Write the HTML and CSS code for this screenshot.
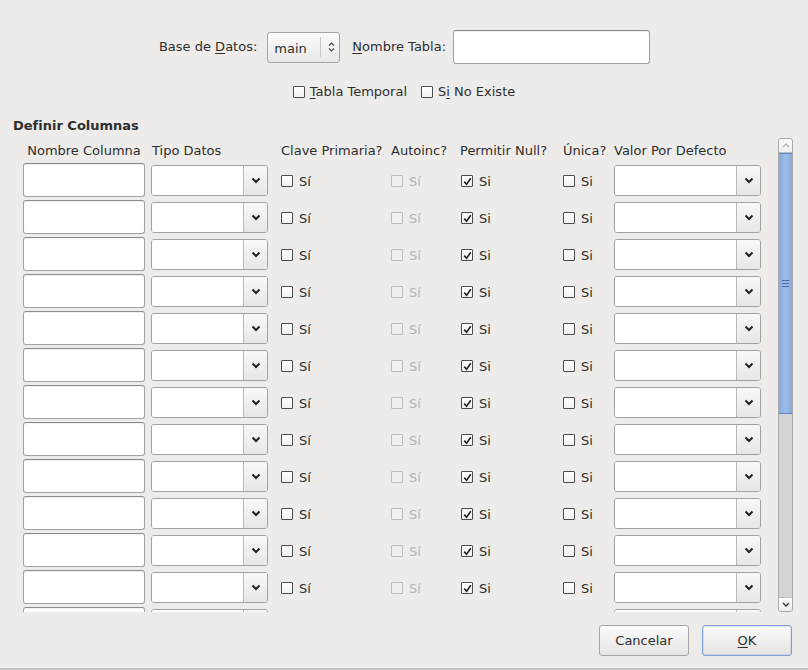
FILE: index.html
```html
<!DOCTYPE html>
<html lang="es">
<head>
<meta charset="utf-8">
<title>Crear Tabla</title>
<link rel="stylesheet" href="styles.css">
</head>
<body>
<div class="top">
  <span class="lbl lbl-base">Base de <u>D</u>atos:</span>
  <div class="dbcombo">
    <span class="dbtext">main</span>
    <span class="dbsep"></span>
    <svg class="updown" width="7" height="10" viewBox="0 0 7 10"><path d="M1 3.5 L3.5 1 L6 3.5 M1 6.5 L3.5 9 L6 6.5" fill="none" stroke="#444" stroke-width="1.1"/></svg>
  </div>
  <span class="lbl lbl-name"><u>N</u>ombre Tabla:</span>
  <div class="entry entry-name"></div>
</div>
<div class="opts">
  <label class="chk"><span class="box"></span><span><u>T</u>abla Temporal</span></label>
  <label class="chk"><span class="box"></span><span>S<u>i</u> No Existe</span></label>
</div>
<div class="title">Definir Columnas</div>
<div class="tablewrap">
  <div class="viewport">
    <div class="grid">
      <div class="hd hd-center">Nombre Columna</div>
      <div class="hd">Tipo Datos</div>
      <div class="hd">Clave Primaria?</div>
      <div class="hd">Autoinc?</div>
      <div class="hd">Permitir Null?</div>
      <div class="hd">Única?</div>
      <div class="hd">Valor Por Defecto</div>

      <div class="entry cell-name"></div><div class="combo c-type"><span class="cfield"></span><span class="carrow"><svg width="10" height="7" viewBox="0 0 10 7"><path d="M1.5 1.5 L5 5 L8.5 1.5" fill="none" stroke="#222" stroke-width="2"/></svg></span></div><label class="chk"><span class="box"></span><span>Sí</span></label><label class="chk dis"><span class="box"></span><span>Sí</span></label><label class="chk"><span class="box on"><svg width="9" height="9" viewBox="0 0 9 9"><path d="M1.2 4.6 L3.6 7.2 L7.8 1.2" fill="none" stroke="#222" stroke-width="1.6"/></svg></span><span>Si</span></label><label class="chk"><span class="box"></span><span>Si</span></label><div class="combo c-def"><span class="cfield"></span><span class="carrow"><svg width="10" height="7" viewBox="0 0 10 7"><path d="M1.5 1.5 L5 5 L8.5 1.5" fill="none" stroke="#222" stroke-width="2"/></svg></span></div>

      <div class="entry cell-name"></div><div class="combo c-type"><span class="cfield"></span><span class="carrow"><svg width="10" height="7" viewBox="0 0 10 7"><path d="M1.5 1.5 L5 5 L8.5 1.5" fill="none" stroke="#222" stroke-width="2"/></svg></span></div><label class="chk"><span class="box"></span><span>Sí</span></label><label class="chk dis"><span class="box"></span><span>Sí</span></label><label class="chk"><span class="box on"><svg width="9" height="9" viewBox="0 0 9 9"><path d="M1.2 4.6 L3.6 7.2 L7.8 1.2" fill="none" stroke="#222" stroke-width="1.6"/></svg></span><span>Si</span></label><label class="chk"><span class="box"></span><span>Si</span></label><div class="combo c-def"><span class="cfield"></span><span class="carrow"><svg width="10" height="7" viewBox="0 0 10 7"><path d="M1.5 1.5 L5 5 L8.5 1.5" fill="none" stroke="#222" stroke-width="2"/></svg></span></div>

      <div class="entry cell-name"></div><div class="combo c-type"><span class="cfield"></span><span class="carrow"><svg width="10" height="7" viewBox="0 0 10 7"><path d="M1.5 1.5 L5 5 L8.5 1.5" fill="none" stroke="#222" stroke-width="2"/></svg></span></div><label class="chk"><span class="box"></span><span>Sí</span></label><label class="chk dis"><span class="box"></span><span>Sí</span></label><label class="chk"><span class="box on"><svg width="9" height="9" viewBox="0 0 9 9"><path d="M1.2 4.6 L3.6 7.2 L7.8 1.2" fill="none" stroke="#222" stroke-width="1.6"/></svg></span><span>Si</span></label><label class="chk"><span class="box"></span><span>Si</span></label><div class="combo c-def"><span class="cfield"></span><span class="carrow"><svg width="10" height="7" viewBox="0 0 10 7"><path d="M1.5 1.5 L5 5 L8.5 1.5" fill="none" stroke="#222" stroke-width="2"/></svg></span></div>

      <div class="entry cell-name"></div><div class="combo c-type"><span class="cfield"></span><span class="carrow"><svg width="10" height="7" viewBox="0 0 10 7"><path d="M1.5 1.5 L5 5 L8.5 1.5" fill="none" stroke="#222" stroke-width="2"/></svg></span></div><label class="chk"><span class="box"></span><span>Sí</span></label><label class="chk dis"><span class="box"></span><span>Sí</span></label><label class="chk"><span class="box on"><svg width="9" height="9" viewBox="0 0 9 9"><path d="M1.2 4.6 L3.6 7.2 L7.8 1.2" fill="none" stroke="#222" stroke-width="1.6"/></svg></span><span>Si</span></label><label class="chk"><span class="box"></span><span>Si</span></label><div class="combo c-def"><span class="cfield"></span><span class="carrow"><svg width="10" height="7" viewBox="0 0 10 7"><path d="M1.5 1.5 L5 5 L8.5 1.5" fill="none" stroke="#222" stroke-width="2"/></svg></span></div>

      <div class="entry cell-name"></div><div class="combo c-type"><span class="cfield"></span><span class="carrow"><svg width="10" height="7" viewBox="0 0 10 7"><path d="M1.5 1.5 L5 5 L8.5 1.5" fill="none" stroke="#222" stroke-width="2"/></svg></span></div><label class="chk"><span class="box"></span><span>Sí</span></label><label class="chk dis"><span class="box"></span><span>Sí</span></label><label class="chk"><span class="box on"><svg width="9" height="9" viewBox="0 0 9 9"><path d="M1.2 4.6 L3.6 7.2 L7.8 1.2" fill="none" stroke="#222" stroke-width="1.6"/></svg></span><span>Si</span></label><label class="chk"><span class="box"></span><span>Si</span></label><div class="combo c-def"><span class="cfield"></span><span class="carrow"><svg width="10" height="7" viewBox="0 0 10 7"><path d="M1.5 1.5 L5 5 L8.5 1.5" fill="none" stroke="#222" stroke-width="2"/></svg></span></div>

      <div class="entry cell-name"></div><div class="combo c-type"><span class="cfield"></span><span class="carrow"><svg width="10" height="7" viewBox="0 0 10 7"><path d="M1.5 1.5 L5 5 L8.5 1.5" fill="none" stroke="#222" stroke-width="2"/></svg></span></div><label class="chk"><span class="box"></span><span>Sí</span></label><label class="chk dis"><span class="box"></span><span>Sí</span></label><label class="chk"><span class="box on"><svg width="9" height="9" viewBox="0 0 9 9"><path d="M1.2 4.6 L3.6 7.2 L7.8 1.2" fill="none" stroke="#222" stroke-width="1.6"/></svg></span><span>Si</span></label><label class="chk"><span class="box"></span><span>Si</span></label><div class="combo c-def"><span class="cfield"></span><span class="carrow"><svg width="10" height="7" viewBox="0 0 10 7"><path d="M1.5 1.5 L5 5 L8.5 1.5" fill="none" stroke="#222" stroke-width="2"/></svg></span></div>

      <div class="entry cell-name"></div><div class="combo c-type"><span class="cfield"></span><span class="carrow"><svg width="10" height="7" viewBox="0 0 10 7"><path d="M1.5 1.5 L5 5 L8.5 1.5" fill="none" stroke="#222" stroke-width="2"/></svg></span></div><label class="chk"><span class="box"></span><span>Sí</span></label><label class="chk dis"><span class="box"></span><span>Sí</span></label><label class="chk"><span class="box on"><svg width="9" height="9" viewBox="0 0 9 9"><path d="M1.2 4.6 L3.6 7.2 L7.8 1.2" fill="none" stroke="#222" stroke-width="1.6"/></svg></span><span>Si</span></label><label class="chk"><span class="box"></span><span>Si</span></label><div class="combo c-def"><span class="cfield"></span><span class="carrow"><svg width="10" height="7" viewBox="0 0 10 7"><path d="M1.5 1.5 L5 5 L8.5 1.5" fill="none" stroke="#222" stroke-width="2"/></svg></span></div>

      <div class="entry cell-name"></div><div class="combo c-type"><span class="cfield"></span><span class="carrow"><svg width="10" height="7" viewBox="0 0 10 7"><path d="M1.5 1.5 L5 5 L8.5 1.5" fill="none" stroke="#222" stroke-width="2"/></svg></span></div><label class="chk"><span class="box"></span><span>Sí</span></label><label class="chk dis"><span class="box"></span><span>Sí</span></label><label class="chk"><span class="box on"><svg width="9" height="9" viewBox="0 0 9 9"><path d="M1.2 4.6 L3.6 7.2 L7.8 1.2" fill="none" stroke="#222" stroke-width="1.6"/></svg></span><span>Si</span></label><label class="chk"><span class="box"></span><span>Si</span></label><div class="combo c-def"><span class="cfield"></span><span class="carrow"><svg width="10" height="7" viewBox="0 0 10 7"><path d="M1.5 1.5 L5 5 L8.5 1.5" fill="none" stroke="#222" stroke-width="2"/></svg></span></div>

      <div class="entry cell-name"></div><div class="combo c-type"><span class="cfield"></span><span class="carrow"><svg width="10" height="7" viewBox="0 0 10 7"><path d="M1.5 1.5 L5 5 L8.5 1.5" fill="none" stroke="#222" stroke-width="2"/></svg></span></div><label class="chk"><span class="box"></span><span>Sí</span></label><label class="chk dis"><span class="box"></span><span>Sí</span></label><label class="chk"><span class="box on"><svg width="9" height="9" viewBox="0 0 9 9"><path d="M1.2 4.6 L3.6 7.2 L7.8 1.2" fill="none" stroke="#222" stroke-width="1.6"/></svg></span><span>Si</span></label><label class="chk"><span class="box"></span><span>Si</span></label><div class="combo c-def"><span class="cfield"></span><span class="carrow"><svg width="10" height="7" viewBox="0 0 10 7"><path d="M1.5 1.5 L5 5 L8.5 1.5" fill="none" stroke="#222" stroke-width="2"/></svg></span></div>

      <div class="entry cell-name"></div><div class="combo c-type"><span class="cfield"></span><span class="carrow"><svg width="10" height="7" viewBox="0 0 10 7"><path d="M1.5 1.5 L5 5 L8.5 1.5" fill="none" stroke="#222" stroke-width="2"/></svg></span></div><label class="chk"><span class="box"></span><span>Sí</span></label><label class="chk dis"><span class="box"></span><span>Sí</span></label><label class="chk"><span class="box on"><svg width="9" height="9" viewBox="0 0 9 9"><path d="M1.2 4.6 L3.6 7.2 L7.8 1.2" fill="none" stroke="#222" stroke-width="1.6"/></svg></span><span>Si</span></label><label class="chk"><span class="box"></span><span>Si</span></label><div class="combo c-def"><span class="cfield"></span><span class="carrow"><svg width="10" height="7" viewBox="0 0 10 7"><path d="M1.5 1.5 L5 5 L8.5 1.5" fill="none" stroke="#222" stroke-width="2"/></svg></span></div>

      <div class="entry cell-name"></div><div class="combo c-type"><span class="cfield"></span><span class="carrow"><svg width="10" height="7" viewBox="0 0 10 7"><path d="M1.5 1.5 L5 5 L8.5 1.5" fill="none" stroke="#222" stroke-width="2"/></svg></span></div><label class="chk"><span class="box"></span><span>Sí</span></label><label class="chk dis"><span class="box"></span><span>Sí</span></label><label class="chk"><span class="box on"><svg width="9" height="9" viewBox="0 0 9 9"><path d="M1.2 4.6 L3.6 7.2 L7.8 1.2" fill="none" stroke="#222" stroke-width="1.6"/></svg></span><span>Si</span></label><label class="chk"><span class="box"></span><span>Si</span></label><div class="combo c-def"><span class="cfield"></span><span class="carrow"><svg width="10" height="7" viewBox="0 0 10 7"><path d="M1.5 1.5 L5 5 L8.5 1.5" fill="none" stroke="#222" stroke-width="2"/></svg></span></div>

      <div class="entry cell-name"></div><div class="combo c-type"><span class="cfield"></span><span class="carrow"><svg width="10" height="7" viewBox="0 0 10 7"><path d="M1.5 1.5 L5 5 L8.5 1.5" fill="none" stroke="#222" stroke-width="2"/></svg></span></div><label class="chk"><span class="box"></span><span>Sí</span></label><label class="chk dis"><span class="box"></span><span>Sí</span></label><label class="chk"><span class="box on"><svg width="9" height="9" viewBox="0 0 9 9"><path d="M1.2 4.6 L3.6 7.2 L7.8 1.2" fill="none" stroke="#222" stroke-width="1.6"/></svg></span><span>Si</span></label><label class="chk"><span class="box"></span><span>Si</span></label><div class="combo c-def"><span class="cfield"></span><span class="carrow"><svg width="10" height="7" viewBox="0 0 10 7"><path d="M1.5 1.5 L5 5 L8.5 1.5" fill="none" stroke="#222" stroke-width="2"/></svg></span></div>

      <div class="entry cell-name"></div><div class="combo c-type"><span class="cfield"></span><span class="carrow"><svg width="10" height="7" viewBox="0 0 10 7"><path d="M1.5 1.5 L5 5 L8.5 1.5" fill="none" stroke="#222" stroke-width="2"/></svg></span></div><div class="empty"></div><div class="empty"></div><div class="empty"></div><div class="empty"></div><div class="combo c-def"><span class="cfield"></span><span class="carrow"><svg width="10" height="7" viewBox="0 0 10 7"><path d="M1.5 1.5 L5 5 L8.5 1.5" fill="none" stroke="#222" stroke-width="2"/></svg></span></div>
    </div>
  </div>
  <div class="scrollbar">
    <div class="stepper">
      <svg width="8" height="5" viewBox="0 0 8 5"><path d="M1 4 L4 1 L7 4" fill="none" stroke="#b5b5b5" stroke-width="1.3"/></svg>
    </div>
    <div class="trough">
      <div class="thumb"><span class="grip"></span></div>
    </div>
    <div class="stepper stepper-down">
      <svg width="8" height="5" viewBox="0 0 8 5"><path d="M1 1 L4 4 L7 1" fill="none" stroke="#333" stroke-width="1.3"/></svg>
    </div>
  </div>
</div>
<div class="footer">
  <button class="btn">Cancelar</button>
  <button class="btn btn-ok"><u>O</u>K</button>
</div>
</body>
</html>
```

FILE: styles.css
```css
* { box-sizing: border-box; }
html, body { margin: 0; padding: 0; }
body {
  width: 808px;
  height: 670px;
  background: #edeceb;
  border-bottom: 2px solid #c4c3c1;
  font-family: "DejaVu Sans", sans-serif;
  font-size: 13px;
  color: #2e2e2e;
  overflow: hidden;
}
u { text-decoration: underline; text-underline-offset: 2px; }

.top {
  display: flex;
  justify-content: center;
  align-items: center;
  padding-top: 30px;
  height: 63px;
  padding-left: 1px;
}
.lbl-base { margin-right: 10px; }
.lbl-name { margin-left: 12px; margin-right: 7px; }
.dbcombo {
  width: 73px;
  height: 31px;
  border: 1px solid #a4a4a4;
  border-radius: 3px;
  background: linear-gradient(#fbfbfb, #e9e9e8);
  display: flex;
  align-items: center;
  margin-top: 1px;
}
.dbtext { padding-left: 6px; width: 52px; padding-top: 3px; }
.dbsep { width: 1px; height: 20px; background: #c9c9c9; }
.updown { margin-left: 7px; }

.entry {
  background: #fff;
  border: 1px solid #a2a2a2;
  border-top-color: #8c8c8c;
  border-radius: 3px;
  box-shadow: inset 0 1px 1px rgba(0,0,0,0.06);
}
.entry-name { width: 197px; height: 34px; }

.opts {
  display: flex;
  justify-content: center;
  gap: 14px;
  margin-top: 21px;
  height: 15px;
}
.opts .chk { gap: 5px; }
.chk {
  display: flex;
  align-items: center;
  gap: 6px;
  line-height: 15px;
}
.box {
  width: 12px;
  height: 12px;
  border: 1px solid #4c4c4c;
  border-radius: 1px;
  background: linear-gradient(#ffffff, #f1f1f1);
  display: flex;
  align-items: center;
  justify-content: center;
  flex: none;
}
.chk.dis { color: #b3b3b3; }
.chk.dis .box { border-color: #bcbcbc; background: #f1f0ef; }

.title {
  font-weight: bold;
  margin-top: 19px;
  margin-left: 13px;
  line-height: 15px;
}

.tablewrap {
  display: flex;
  margin-top: 5px;
  height: 474px;
  padding-left: 23px;
}
.viewport {
  flex: 1;
  overflow: hidden;
  height: 474px;
}
.grid {
  display: grid;
  grid-template-columns: 128px 130px 110px 69px 103px 51px 147px;
  grid-template-rows: 22px;
  grid-auto-rows: 34px;
  row-gap: 3px;
  align-items: center;
}
.hd { line-height: 15px; padding-top: 2px; white-space: nowrap; }
.hd:nth-child(2) { padding-left: 1px; }
.hd-center { width: 122px; text-align: center; }
.cell-name { width: 122px; height: 34px; }
.grid .chk { padding-top: 2px; }
.grid .chk:nth-child(7n+5) { padding-left: 1px; }

.combo {
  height: 31px;
  display: flex;
  border: 1px solid #a2a2a2;
  border-radius: 3px;
  overflow: hidden;
  background: #fff;
}
.c-type { width: 117px; }
.c-def { width: 147px; }
.cfield { flex: 1; background: #fff; }
.carrow {
  width: 24px;
  border-left: 1px solid #b9b9b9;
  background: linear-gradient(#f8f8f8, #e7e7e6);
  display: flex;
  align-items: center;
  justify-content: center;
}

.scrollbar {
  width: 15px;
  margin-left: 3px;
  margin-right: 15px;
  height: 474px;
  border: 1px solid #a9a9a9;
  border-radius: 3px;
  background: #d5d4d2;
  display: flex;
  flex-direction: column;
  overflow: hidden;
}
.stepper {
  height: 14px;
  flex: none;
  background: linear-gradient(#fdfdfd, #eeeeee);
  display: flex;
  align-items: center;
  justify-content: center;
  border-bottom: 1px solid #bdbdbd;
}
.stepper-down { border-bottom: none; border-top: 1px solid #bdbdbd; }
.trough { flex: 1; }
.thumb {
  height: 261px;
  background: linear-gradient(90deg, #88abdd, #9dbbe6 50%, #88abdd);
  border: 1px solid #5f88c6;
  margin: 0 -1px;
  display: flex;
  align-items: center;
  justify-content: center;
}
.grip {
  width: 7px;
  height: 7px;
  border-top: 1px solid #4b6fa6;
  border-bottom: 1px solid #4b6fa6;
  position: relative;
}
.grip::after {
  content: "";
  position: absolute;
  left: 0; right: 0; top: 2px;
  border-top: 1px solid #4b6fa6;
}

.footer {
  display: flex;
  justify-content: flex-end;
  gap: 13px;
  margin-top: 13px;
  padding-right: 16px;
}
.btn {
  width: 90px;
  height: 31px;
  font-family: "DejaVu Sans", sans-serif;
  font-size: 13px;
  color: #2e2e2e;
  border: 1px solid #a5a5a5;
  border-radius: 3px;
  background: linear-gradient(#fbfbfb, #e6e5e4);
  padding: 0;
}
.btn-ok { border-color: #7ea2d6; box-shadow: inset 0 0 0 1px rgba(126,162,214,0.25); }
```
